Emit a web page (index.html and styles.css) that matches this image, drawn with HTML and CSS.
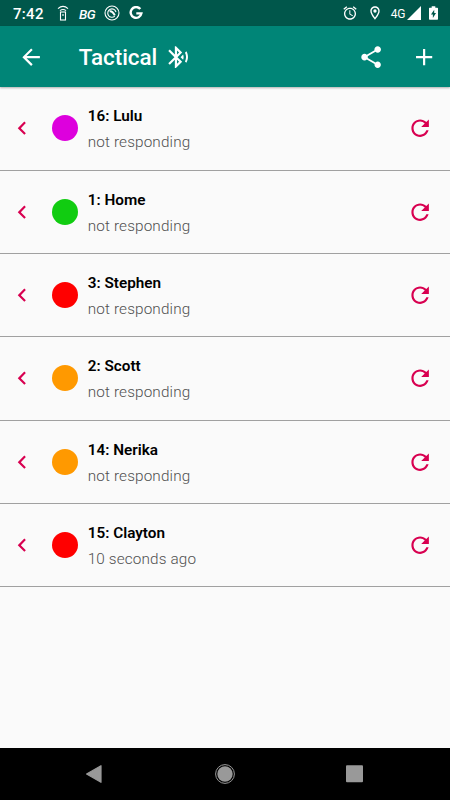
FILE: index.html
```html
<!DOCTYPE html>
<html lang="en">
<head>
<meta charset="utf-8">
<title>Tactical</title>
<link rel="stylesheet" href="styles.css">
</head>
<body>
<svg class="defs" aria-hidden="true">
  <symbol id="chevron" viewBox="0 0 24 24"><path d="M15.41 7.41L14 6l-6 6 6 6 1.41-1.41L10.83 12z"/></symbol>
  <symbol id="refresh" viewBox="0 0 24 24"><path d="M17.65 6.35C16.2 4.9 14.21 4 12 4c-4.42 0-7.99 3.58-7.99 8s3.57 8 7.99 8c3.73 0 6.84-2.55 7.73-6h-2.08c-.82 2.33-3.04 4-5.65 4-3.31 0-6-2.69-6-6s2.69-6 6-6c1.66 0 3.14.69 4.22 1.78L13 11h7V4l-2.35 2.35z"/></symbol>
</svg>
<div class="status">
  <div class="status-left">
    <span class="clock">7:42</span>
    <svg class="remote" viewBox="0 0 12 16"><path d="M1 3.6Q6-.8 11 3.6M3 5.7Q6 3.2 9 5.7"/><rect x="3.5" y="7" width="5" height="8"/><path d="M6 9v2"/></svg>
    <span class="bg">BG</span>
    <svg class="badge" viewBox="0 0 16 16"><circle cx="8" cy="8" r="7"/><path d="M10.8 11.2A4.2 4.2 0 1 1 12 7"/><path class="thick" d="M5.6 6.2Q8.5 5.6 10.8 10.4"/></svg>
    <svg class="google" viewBox="0 0 14 14"><path d="M11.3 3.1A5.4 5.4 0 1 0 12.4 7.4H7.3"/></svg>
  </div>
  <div class="status-right">
    <svg class="alarm" viewBox="0 0 24 24"><path d="M22 5.72l-4.6-3.86-1.29 1.53 4.6 3.86L22 5.72zM7.88 3.39L6.6 1.86 2 5.71l1.29 1.53 4.59-3.85zM12.5 8H11v6l4.75 2.85.75-1.23-4-2.37V8zM12 4c-4.97 0-9 4.03-9 9s4.02 9 9 9c4.97 0 9-4.03 9-9s-4.03-9-9-9zm0 16c-3.87 0-7-3.13-7-7s3.13-7 7-7 7 3.13 7 7-3.13 7-7 7z"/></svg>
    <svg class="pin" viewBox="0 0 24 24"><path d="M12 2C8.13 2 5 5.13 5 9c0 5.25 7 13 7 13s7-7.75 7-13c0-3.87-3.13-7-7-7zM7 9c0-2.76 2.24-5 5-5s5 2.24 5 5c0 2.88-2.88 7.19-5 9.88C9.92 16.21 7 11.85 7 9z"/><circle cx="12" cy="9" r="2.5"/></svg>
    <span class="net">4G</span>
    <svg class="signal" viewBox="0 0 14 14"><path d="M14 0v14H0z"/></svg>
    <svg class="battery" viewBox="0 0 10 15"><path fill-rule="evenodd" d="M3 0h4v1.6h2.2q.8 0 .8.8v11.8q0 .8-.8.8H.8q-.8 0-.8-.8V2.4q0-.8.8-.8H3zM5.8 4L2.2 9.2h2.1V13L7.8 7.6H5.8z"/></svg>
  </div>
</div>
<header class="appbar">
  <svg class="icon back" viewBox="0 0 24 24"><path d="M20 11H7.83l5.59-5.59L12 4l-8 8 8 8 1.41-1.41L7.83 13H20v-2z"/></svg>
  <h1>Tactical</h1>
  <svg class="icon bt" viewBox="0 0 24 24"><path d="M14.24 12.01l2.32 2.32c.28-.72.44-1.51.44-2.33 0-.82-.16-1.59-.43-2.31l-2.33 2.32zm5.29-5.3l-1.26 1.26c.63 1.21.98 2.57.98 4.02s-.36 2.82-.98 4.02l1.2 1.2c.97-1.54 1.54-3.36 1.54-5.31-.01-1.89-.55-3.67-1.48-5.19zm-3.82 1L10 2H9v7.59L4.41 5 3 6.41 8.59 12 3 17.59 4.41 19 9 14.41V22h1l5.71-5.71-4.3-4.29 4.3-4.29zM11 5.83l1.88 1.88L11 9.59V5.83zm1.88 10.46L11 18.17v-3.76l1.88 1.88z"/></svg>
  <svg class="icon share" viewBox="0 0 24 24"><path d="M18 16.08c-.76 0-1.44.3-1.96.77L8.91 12.7c.05-.23.09-.46.09-.7s-.04-.47-.09-.7l7.05-4.11c.54.5 1.25.81 2.04.81 1.66 0 3-1.34 3-3s-1.34-3-3-3-3 1.34-3 3c0 .24.04.47.09.7L8.04 9.81C7.5 9.31 6.79 9 6 9c-1.66 0-3 1.34-3 3s1.34 3 3 3c.79 0 1.5-.31 2.04-.81l7.12 4.16c-.05.21-.08.43-.08.65 0 1.61 1.31 2.92 2.92 2.92s2.92-1.31 2.92-2.92-1.31-2.92-2.92-2.92z"/></svg>
  <svg class="icon add" viewBox="0 0 24 24"><path d="M19.4 13H13v6.4h-2V13H4.6v-2H11V4.6h2V11h6.4v2z"/></svg>
</header>
<main class="list">
  <div class="row"><svg class="icon chevron"><use href="#chevron"/></svg><span class="dot magenta"></span><div class="text"><b>16: Lulu</b><span>not responding</span></div><svg class="icon refresh"><use href="#refresh"/></svg></div>
  <div class="row"><svg class="icon chevron"><use href="#chevron"/></svg><span class="dot green"></span><div class="text"><b>1: Home</b><span>not responding</span></div><svg class="icon refresh"><use href="#refresh"/></svg></div>
  <div class="row"><svg class="icon chevron"><use href="#chevron"/></svg><span class="dot red"></span><div class="text"><b>3: Stephen</b><span>not responding</span></div><svg class="icon refresh"><use href="#refresh"/></svg></div>
  <div class="row"><svg class="icon chevron"><use href="#chevron"/></svg><span class="dot orange"></span><div class="text"><b>2: Scott</b><span>not responding</span></div><svg class="icon refresh"><use href="#refresh"/></svg></div>
  <div class="row"><svg class="icon chevron"><use href="#chevron"/></svg><span class="dot orange"></span><div class="text"><b>14: Nerika</b><span>not responding</span></div><svg class="icon refresh"><use href="#refresh"/></svg></div>
  <div class="row"><svg class="icon chevron"><use href="#chevron"/></svg><span class="dot red"></span><div class="text"><b>15: Clayton</b><span>10 seconds ago</span></div><svg class="icon refresh"><use href="#refresh"/></svg></div>
</main>
<nav class="navbar">
  <svg viewBox="0 0 20 20"><path d="M1.6 10L16 1.7v16.6z" stroke-width="1.2" stroke="#999" stroke-linejoin="round"/></svg>
  <svg viewBox="0 0 20 20"><circle cx="10" cy="10" r="9.4" fill="none" stroke="#999" stroke-width="1"/><circle cx="10" cy="10" r="7.7"/></svg>
  <svg viewBox="0 0 20 20"><rect x="1" y="1.2" width="17" height="17" rx="1"/></svg>
</nav>
</body>
</html>
```
FILE: styles.css
```css
* { box-sizing: border-box; }
body {
  margin: 0;
  width: 450px;
  height: 800px;
  display: flex;
  flex-direction: column;
  overflow: hidden;
  background: #fafafa;
  font-family: Roboto, sans-serif;
}
svg { display: block; flex: none; }
.defs { display: none; }
.icon { width: 26.25px; height: 26.25px; fill: currentColor; }

.status {
  height: 26px;
  flex: none;
  display: flex;
  justify-content: space-between;
  padding: 0 12.3px 0 13px;
  background: #00574b;
  color: #fff;
}
.status-left, .status-right { display: flex; align-items: center; }
.clock { width: 44px; font-size: 15px; font-weight: 500; letter-spacing: 0.3px; line-height: 26px; padding-top: 1px; }
.remote, .badge, .google { fill: none; stroke: #fff; stroke-width: 1.1; }
.remote { width: 12px; height: 16px; }
.bg { width: 26px; margin-left: 10px; font-size: 13.5px; font-style: italic; font-weight: 500; padding-top: 1px; letter-spacing: -0.6px; }
.badge { width: 16px; height: 16px; margin-left: -1px; }
.badge .thick { stroke-width: 2; }
.google { width: 14px; height: 14px; margin-left: 8.5px; stroke-width: 2.4; }
.status-right svg { fill: #fff; }
.status-right .alarm, .status-right .pin { width: 16px; height: 16px; }
.pin { margin-left: 9px; }
.net { width: 16px; margin-left: 8px; font-size: 12px; padding-top: 1px; letter-spacing: -0.3px; }
.signal { width: 14px; height: 14px; }
.battery { width: 9px; height: 14px; margin-left: 8px; }

.appbar {
  height: 61px;
  flex: none;
  display: flex;
  align-items: center;
  padding: 0.6px 13px 0 17.5px;
  background: #008577;
  color: #fff;
  box-shadow: 0 1px 2px rgba(0, 0, 0, 0.3);
  z-index: 1;
}
.appbar h1 {
  margin: 0 8px 0 35px;
  width: 78.5px;
  font-size: 22.4px;
  font-weight: 500;
  line-height: 26px;
  white-space: nowrap;
}
.share { margin-left: auto; }
.add { margin-left: 26.5px; }

.list { flex: 1; padding-top: 0.3px; }
.row {
  height: 83.33px;
  display: flex;
  align-items: center;
  padding: 0 17px 0 8.7px;
  border-bottom: 1px solid #a0a0a0;
  color: #d80050;
}
.dot { width: 26px; height: 26px; margin-left: 17.5px; border-radius: 50%; }
.magenta { background: #dd00dd; }
.green { background: #11cc11; }
.red { background: #ff0000; }
.orange { background: #ff9900; }
.text { flex: 1; margin-left: 9.3px; padding-top: 2px; display: flex; flex-direction: column; }
.text b { color: #000; font-size: 15.3px; font-weight: 600; line-height: 26px; }
.text span { color: #505050; font-size: 15.3px; font-weight: 300; line-height: 26px; letter-spacing: 0.14px; }

.navbar {
  height: 52px;
  flex: none;
  display: grid;
  grid-template-columns: repeat(3, 130px);
  justify-content: center;
  justify-items: center;
  align-items: center;
  background: #000;
}
.navbar svg { width: 20px; height: 20px; fill: #999; }
```
